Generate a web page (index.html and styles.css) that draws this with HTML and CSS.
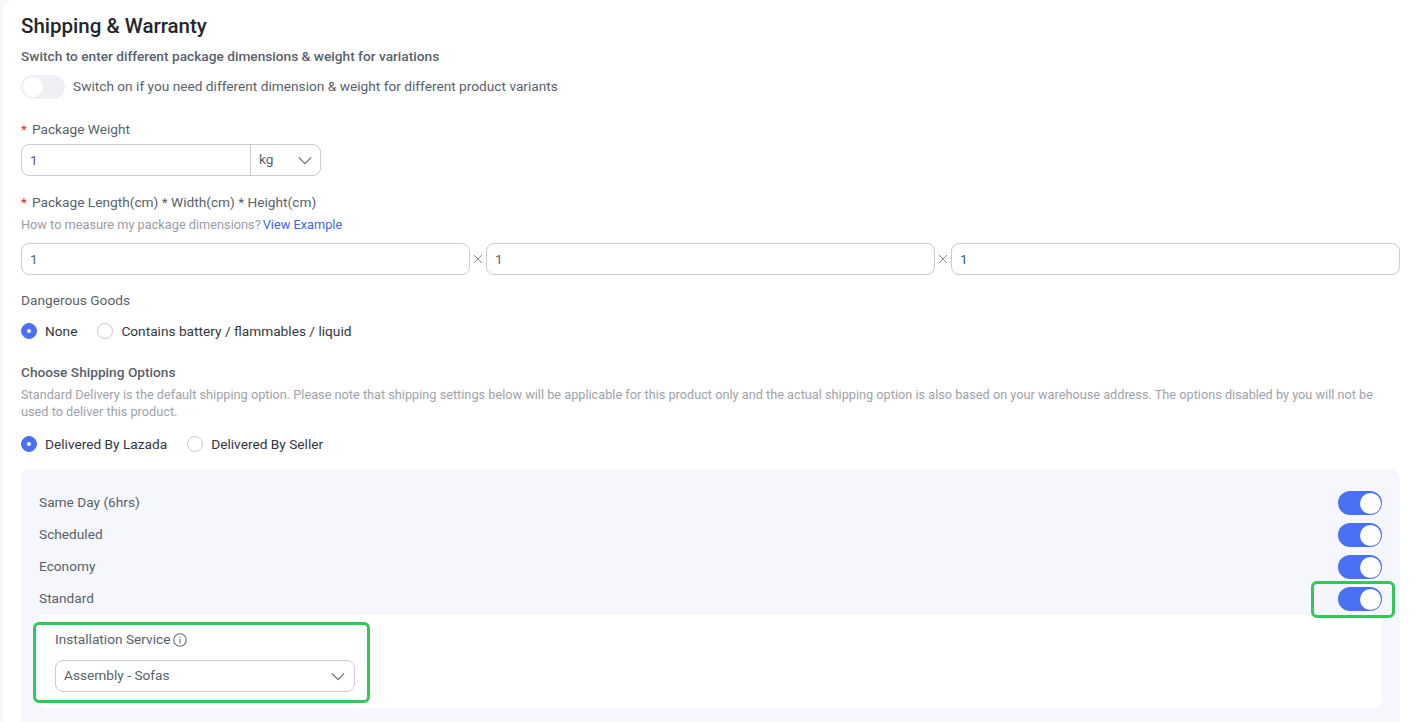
FILE: index.html
```html
<!DOCTYPE html>
<html lang="en">
<head>
<meta charset="utf-8">
<title>Shipping &amp; Warranty</title>
<link rel="stylesheet" href="styles.css">
</head>
<body>
<main class="card">
  <h1 class="title">Shipping &amp; Warranty</h1>
  <div class="sub-label">Switch to enter different package dimensions &amp; weight for variations</div>
  <div class="switch-row">
    <span class="toggle"><span class="knob"></span></span>
    <span class="switch-text">Switch on if you need different dimension &amp; weight for different product variants</span>
  </div>

  <div class="label weight-label"><span class="req">*</span>Package Weight</div>
  <div class="field weight-field">
    <span class="weight-value">1</span>
    <span class="unit">kg
      <svg class="chev" viewBox="0 0 16 10"><path d="M1 1.5 8 8.5 15 1.5"/></svg>
    </span>
  </div>

  <div class="label dim-label"><span class="req">*</span>Package Length(cm) * Width(cm) * Height(cm)</div>
  <div class="hint">How to measure my package dimensions?<a class="link">View Example</a></div>
  <div class="dims">
    <div class="field dim">1</div>
    <svg class="times" viewBox="0 0 10 10"><path d="M1 1 9 9M9 1 1 9"/></svg>
    <div class="field dim">1</div>
    <svg class="times" viewBox="0 0 10 10"><path d="M1 1 9 9M9 1 1 9"/></svg>
    <div class="field dim dim-blue">1</div>
  </div>

  <div class="label danger-label">Dangerous Goods</div>
  <div class="radios danger-radios">
    <span class="radio on"></span><span class="radio-text">None</span>
    <span class="radio second"></span><span class="radio-text">Contains battery / flammables / liquid</span>
  </div>

  <div class="sub-label choose-label">Choose Shipping Options</div>
  <p class="desc">Standard Delivery is the default shipping option. Please note that shipping settings below will be applicable for this product only and the actual shipping option is also based on your warehouse address. The options disabled by you will not be used to deliver this product.</p>
  <div class="radios ship-radios">
    <span class="radio on"></span><span class="radio-text">Delivered By Lazada</span>
    <span class="radio second"></span><span class="radio-text">Delivered By Seller</span>
  </div>

  <section class="panel">
    <div class="opt"><span>Same Day (6hrs)</span><span class="toggle active"><span class="knob"></span></span></div>
    <div class="opt"><span>Scheduled</span><span class="toggle active"><span class="knob"></span></span></div>
    <div class="opt"><span>Economy</span><span class="toggle active"><span class="knob"></span></span></div>
    <div class="opt"><span>Standard</span><span class="toggle active"><span class="knob"></span></span><span class="mark mark-toggle"></span></div>
    <div class="inner">
      <span class="mark mark-install"></span>
      <div class="install-label">Installation Service
        <svg class="info" viewBox="0 0 14 14"><circle cx="7" cy="7" r="6.3"/><path d="M7 6v4.4M7 3.4v1.4"/></svg>
      </div>
      <div class="field select"><span class="select-text">Assembly - Sofas</span>
        <svg class="chev" viewBox="0 0 16 10"><path d="M1 1.5 8 8.5 15 1.5"/></svg>
      </div>
    </div>
  </section>
</main>
</body>
</html>
```
FILE: styles.css
```css
* { box-sizing: border-box; }
html, body { margin: 0; height: 722px; overflow: hidden; }
body { background: #f6f7fb; font-family: Roboto, "Liberation Sans", sans-serif; color: #595f6d; font-size: 13.7px; }
.card { margin-left: 2px; height: 722px; background: #fff; border-radius: 12px 0 0 0; padding: 0 18px 0 19px; overflow: hidden; }
.title { margin: 0; padding-top: 14px; font-size: 20.5px; line-height: 24px; font-weight: 500; color: #24262e; }
.sub-label { margin-top: 9px; font-size: 13.7px; line-height: 18px; font-weight: 500; color: #595f6d; }
.switch-row { display: flex; align-items: center; gap: 8px; margin-top: 10px; height: 24px; }
.switch-text { font-size: 13.7px; line-height: 22px; padding-bottom: 2px; color: #595f6d; }
.toggle { display: inline-block; position: relative; width: 44px; height: 24px; border-radius: 12px; background: #eef0f5; flex: none; }
.knob { position: absolute; left: 2px; top: 2px; width: 20px; height: 20px; border-radius: 50%; background: #fff; }
.toggle.active { background: #4a70f5; margin-top: 2px; }
.toggle.active .knob { left: 22px; top: 1.5px; width: 21px; height: 21px; }
.label { font-size: 13.7px; line-height: 18px; color: #595f6d; }
.req { color: #e02b2b; margin-right: 5px; }
.weight-label { margin-top: 21px; }
.field { border: 1px solid #c9cad6; border-radius: 8px; background: #fff; height: 32px; display: flex; align-items: center; font-size: 13.7px; color: #595f6d; }
.weight-field { margin-top: 6px; width: 300px; }
.weight-value { width: 228px; padding-left: 8px; line-height: 30px; }
.unit { flex: 1; height: 100%; border-left: 1px solid #c9cad6; padding: 0 8px 2px 8px; display: flex; align-items: center; justify-content: space-between; }
.chev { width: 14px; height: 9px; fill: none; stroke: #6a6f7c; stroke-width: 1.4; }
.unit .chev { margin-top: 2px; }
.dim-label { margin-top: 17px; }
.hint { margin-top: 6px; font-size: 12.75px; line-height: 16px; color: #9a9ca6; }
.link { color: #3d66f0; margin-left: 2px; }
.dims { display: flex; align-items: center; margin-top: 10px; gap: 3px; }
.dim { flex: 1; padding-left: 8px; }
.dim-blue { color: #3a5aa8; }
.times { width: 10px; height: 10px; flex: none; fill: none; stroke: #8b8d96; stroke-width: 1; }
.danger-label { margin-top: 16px; }
.radios { display: flex; align-items: center; height: 16px; font-size: 13.7px; color: #33363f; }
.danger-radios { margin-top: 14px; }
.radio { width: 16px; height: 16px; border-radius: 50%; border: 1px solid #c9cad6; background: #fff; flex: none; position: relative; }
.radio.on { background: #4a70f5; border-color: #4a70f5; }
.radio.on::after { content: ""; position: absolute; left: 5px; top: 5px; width: 4px; height: 4px; border-radius: 50%; background: #fff; }
.radio-text { margin-left: 8px; }
.radio.second { margin-left: 20px; }
.choose-label { margin-top: 24px; }
.desc { margin: 5px 0 0; font-size: 12.72px; line-height: 17px; color: #a0a2ab; }
.ship-radios { margin-top: 16px; }
.panel { margin-top: 17px; height: 290px; background: #f6f7fc; border-radius: 10px 10px 0 0; padding: 17px 18px 0; }
.opt { display: flex; justify-content: space-between; align-items: center; height: 32px; font-size: 13.7px; color: #595f6d; position: relative; }
.inner { position: relative; margin-top: 1px; height: 93px; background: #fff; border-radius: 0 0 8px 8px; padding: 16px; }
.install-label { display: flex; align-items: center; gap: 3px; font-size: 13.7px; line-height: 17px; color: #595f6d; }
.info { width: 14px; height: 14px; fill: none; stroke: #6a6f7c; stroke-width: 1.1; }
.select { margin-top: 12px; width: 300px; padding: 0 9px 0 8px; justify-content: space-between; color: #595f6d; }
.select-text { padding-bottom: 2px; }
.mark { position: absolute; border: 3px solid #32c75a; border-radius: 6px; pointer-events: none; z-index: 1; }
.mark-toggle { left: 1272px; top: -1px; width: 84px; height: 37px; }
.mark-install { left: -6px; top: 7px; width: 337px; height: 81px; }
```
